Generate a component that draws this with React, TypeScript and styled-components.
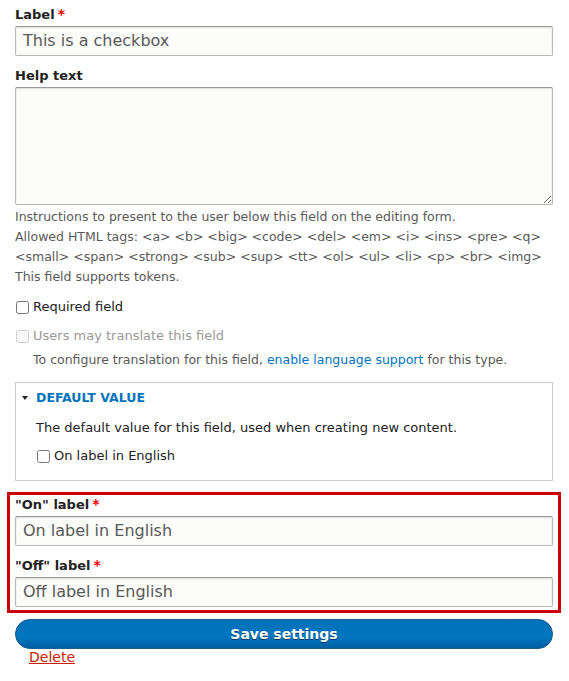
import React from "react";
import styled, { createGlobalStyle } from "styled-components";

const GlobalStyle = createGlobalStyle`
  body {
    margin: 0;
    background: #fff;
    color: #222;
    font-family: "DejaVu Sans", "Liberation Sans", sans-serif;
  }
`;

const Page = styled.form`
  padding: 6px 16px 20px 15px;
  display: flex;
  flex-direction: column;
`;

const FormItem = styled.div<{ $top?: number }>`
  display: flex;
  flex-direction: column;
  margin-top: ${(p) => p.$top ?? 0}px;
`;

const Label = styled.label`
  display: block;
  font-size: 13px;
  font-weight: bold;
  line-height: 18px;
  margin-bottom: 2px;
  color: #222;
`;

const Star = styled.span`
  color: #e00;
  margin-left: 3px;
  font-size: 14px;
  line-height: 1;
`;

const TextInput = styled.input`
  box-sizing: border-box;
  width: 100%;
  height: 30px;
  padding: 0 7px 2px;
  font-family: inherit;
  font-size: 16px;
  color: #595959;
  background: #fcfcfa;
  border: 1px solid #b8b8b8;
  border-top-color: #999;
  border-radius: 2px;
  box-shadow: inset 0 1px 2px rgba(0, 0, 0, 0.125);
  outline: none;
`;

const TextArea = styled.textarea`
  box-sizing: border-box;
  width: 100%;
  height: 118px;
  padding: 4px 7px;
  font-family: inherit;
  font-size: 16px;
  color: #595959;
  background: #fcfcfa;
  border: 1px solid #b8b8b8;
  border-top-color: #999;
  border-radius: 2px;
  box-shadow: inset 0 1px 2px rgba(0, 0, 0, 0.125);
  resize: vertical;
  outline: none;
  display: block;
`;

const Description = styled.div<{ $top?: number; $indent?: number }>`
  font-size: 12.5px;
  line-height: 20px;
  color: #595959;
  margin-top: ${(p) => p.$top ?? 2}px;
  padding-left: ${(p) => p.$indent ?? 0}px;
`;

const Link = styled.a`
  color: #0074bd;
  text-decoration: none;
`;

const CheckRow = styled.label<{ $disabled?: boolean; $top?: number }>`
  display: flex;
  align-items: center;
  gap: 4px;
  font-size: 13px;
  line-height: 18px;
  margin-top: ${(p) => p.$top ?? 0}px;
  color: ${(p) => (p.$disabled ? "#999" : "#222")};

  input {
    margin: 0 0 0 1px;
    width: 13px;
    height: 13px;
  }
`;

const Details = styled.div`
  margin-top: 12px;
  border: 1px solid #ccc;
  display: flex;
  flex-direction: column;
`;

const Summary = styled.div`
  display: flex;
  align-items: center;
  gap: 8px;
  padding: 6px 7px 6px 6px;
  font-size: 12.5px;
  line-height: 18px;
  font-weight: bold;
  text-transform: uppercase;
  color: #0074bd;
`;

const Caret = styled.span`
  width: 0;
  height: 0;
  border-left: 3px solid transparent;
  border-right: 3px solid transparent;
  border-top: 4px solid #222;
`;

const DetailsBody = styled.div`
  padding: 6px 20px 15px 20px;
  display: flex;
  flex-direction: column;
  gap: 10px;
`;

const BodyText = styled.div`
  font-size: 13px;
  line-height: 18px;
  color: #222;
`;

const Highlight = styled.div`
  margin: 11px -8px 0;
  border: 3px solid #cc0000;
  padding: 1px 5px 3px;
  display: flex;
  flex-direction: column;
`;

const SaveButton = styled.button`
  margin-top: 6px;
  height: 30px;
  width: 100%;
  border: 1px solid #1e5c90;
  border-radius: 20em;
  background-color: #0071b8;
  background-image: linear-gradient(to top, #005fa3, #0077c0 40%, #0071b8);
  color: #fff;
  font-family: inherit;
  font-size: 14px;
  font-weight: bold;
  text-shadow: 0 1px rgba(0, 0, 0, 0.5);
  cursor: pointer;
`;

const DeleteLink = styled.a`
  align-self: flex-start;
  display: inline-block;
  padding: 0 14px;
  font-size: 14px;
  line-height: 16px;
  color: #c72100;
  text-decoration: underline;
`;

const App: React.FC = () => {
  return (
    <>
      <GlobalStyle />
      <Page onSubmit={(e) => e.preventDefault()}>
        <FormItem>
          <Label>
            Label<Star>*</Star>
          </Label>
          <TextInput defaultValue="This is a checkbox" />
        </FormItem>

        <FormItem $top={11}>
          <Label>Help text</Label>
          <TextArea />
          <Description>
            Instructions to present to the user below this field on the editing form.
            <br />
            Allowed HTML tags: &lt;a&gt; &lt;b&gt; &lt;big&gt; &lt;code&gt; &lt;del&gt; &lt;em&gt;
            &lt;i&gt; &lt;ins&gt; &lt;pre&gt; &lt;q&gt; &lt;small&gt; &lt;span&gt; &lt;strong&gt;
            &lt;sub&gt; &lt;sup&gt; &lt;tt&gt; &lt;ol&gt; &lt;ul&gt; &lt;li&gt; &lt;p&gt; &lt;br&gt;
            &lt;img&gt;
            <br />
            This field supports tokens.
          </Description>
        </FormItem>

        <CheckRow $top={11}>
          <input type="checkbox" />
          Required field
        </CheckRow>

        <FormItem $top={11}>
          <CheckRow $disabled>
            <input type="checkbox" disabled />
            Users may translate this field
          </CheckRow>
          <Description $top={5} $indent={18}>
            To configure translation for this field,{" "}
            <Link href="#">enable language support</Link> for this type.
          </Description>
        </FormItem>

        <Details>
          <Summary>
            <Caret />
            Default value
          </Summary>
          <DetailsBody>
            <BodyText>The default value for this field, used when creating new content.</BodyText>
            <CheckRow>
              <input type="checkbox" />
              On label in English
            </CheckRow>
          </DetailsBody>
        </Details>

        <Highlight>
          <FormItem>
            <Label>
              "On" label<Star>*</Star>
            </Label>
            <TextInput defaultValue="On label in English" />
          </FormItem>
          <FormItem $top={11}>
            <Label>
              "Off" label<Star>*</Star>
            </Label>
            <TextInput defaultValue="Off label in English" />
          </FormItem>
        </Highlight>

        <SaveButton type="submit">Save settings</SaveButton>
        <DeleteLink href="#">Delete</DeleteLink>
      </Page>
    </>
  );
};

export default App;
